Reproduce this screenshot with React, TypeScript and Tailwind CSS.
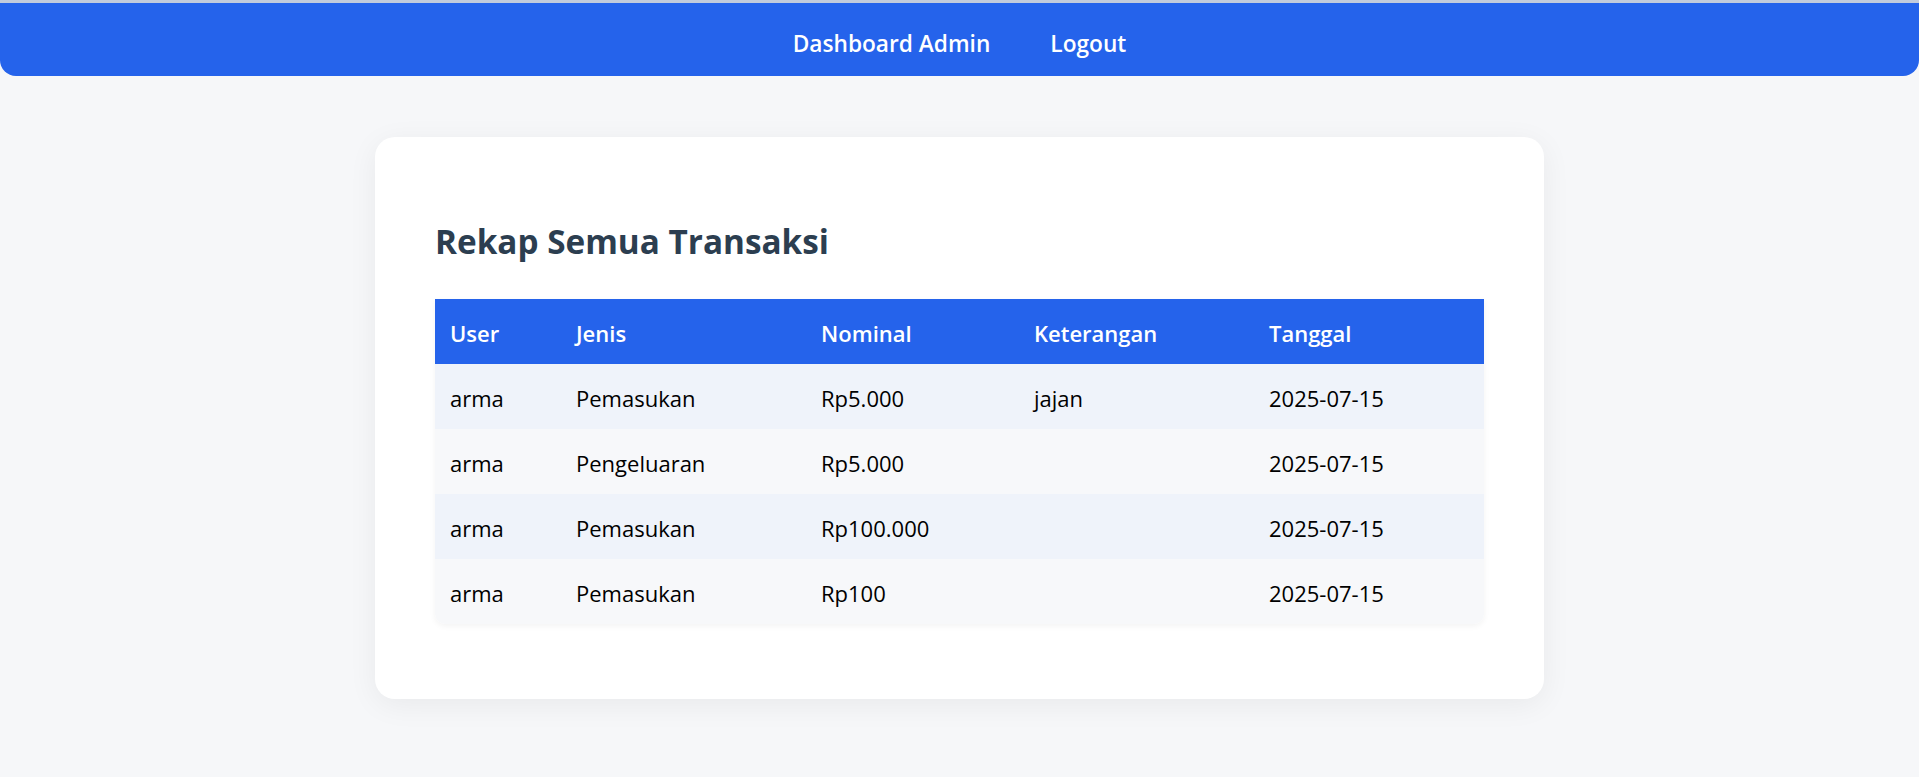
const rows = [
  { user: "arma", jenis: "Pemasukan", nominal: "Rp5.000", ket: "jajan", tanggal: "2025-07-15" },
  { user: "arma", jenis: "Pengeluaran", nominal: "Rp5.000", ket: "", tanggal: "2025-07-15" },
  { user: "arma", jenis: "Pemasukan", nominal: "Rp100.000", ket: "", tanggal: "2025-07-15" },
  { user: "arma", jenis: "Pemasukan", nominal: "Rp100", ket: "", tanggal: "2025-07-15" },
];

export default function App() {
  return (
    <div className="min-h-[777px] bg-[#f6f7f9] font-['Open_Sans',sans-serif]">
      <div className="h-[3px] bg-[#c2cbdc]" />

      <nav className="flex h-[73px] items-center justify-center gap-[60px] rounded-b-2xl bg-[#2563eb] pt-[10px] text-[22.7px] font-semibold text-white">
        <a href="#">Dashboard Admin</a>
        <a href="#">Logout</a>
      </nav>

      <div className="mx-auto mt-[61px] w-[1169px] rounded-[20px] bg-white px-[60px] pt-[60px] pb-[75px] shadow-[0_6px_30px_rgba(0,0,0,0.06)]">
        <h2 className="mt-[24px] mb-[38px] text-[33.3px] leading-[40px] font-bold text-[#2c3e50]">
          Rekap Semua Transaksi
        </h2>

        <table className="w-full table-fixed border-collapse overflow-hidden rounded-b-[10px] text-[22px] shadow-[0_2px_6px_rgba(0,0,0,0.05)]">
          <thead>
            <tr className="h-[65px] bg-[#2563eb] text-left text-white">
              <th className="w-[126px] px-[15px] pt-[3px] font-semibold">User</th>
              <th className="w-[245px] px-[15px] pt-[3px] font-semibold">Jenis</th>
              <th className="w-[213px] px-[15px] pt-[3px] font-semibold">Nominal</th>
              <th className="w-[235px] px-[15px] pt-[3px] font-semibold">Keterangan</th>
              <th className="px-[15px] pt-[3px] font-semibold">Tanggal</th>
            </tr>
          </thead>
          <tbody>
            {rows.map((r, i) => (
              <tr key={i} className={i % 2 === 0 ? "h-[65px] bg-[#eff3fa]" : "h-[65px] bg-[#f7f8fa]"}>
                <td className="px-[15px] pt-[3px] text-black">{r.user}</td>
                <td className="px-[15px] pt-[3px] text-black">{r.jenis}</td>
                <td className="px-[15px] pt-[3px] text-black">{r.nominal}</td>
                <td className="px-[15px] pt-[3px] text-black">{r.ket}</td>
                <td className="px-[15px] pt-[3px] text-black">{r.tanggal}</td>
              </tr>
            ))}
          </tbody>
        </table>
      </div>
    </div>
  );
}
